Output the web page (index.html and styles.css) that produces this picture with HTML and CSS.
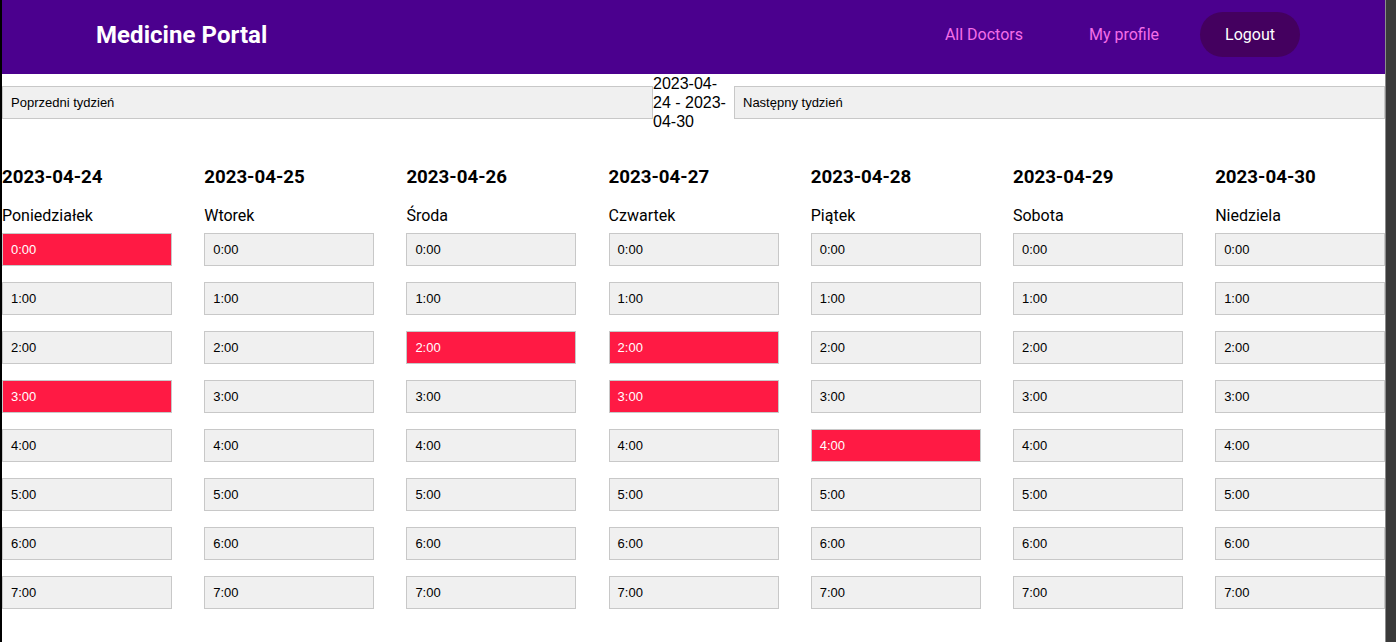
FILE: index.html
```html
<!DOCTYPE html>
<html lang="pl">
<head>
<meta charset="utf-8">
<title>Medicine Portal</title>
<link rel="stylesheet" href="styles.css">
</head>
<body>
<div class="page">
  <header class="topbar">
    <div class="brand">Medicine Portal</div>
    <nav class="nav">
      <a class="nav-link" href="#">All Doctors</a>
      <a class="nav-link" href="#">My profile</a>
      <a class="nav-link logout" href="#">Logout</a>
    </nav>
  </header>

  <div class="week-bar">
    <button class="btn week-btn">Poprzedni tydzień</button>
    <span class="week-range">2023-04-24 - 2023-04-30</span>
    <button class="btn week-btn">Następny tydzień</button>
  </div>

  <div class="days">
    <div class="day">
      <h3 class="day-date">2023-04-24</h3>
      <p class="day-name">Poniedziałek</p>
      <div class="slots">
        <button class="btn slot busy">0:00</button>
        <button class="btn slot">1:00</button>
        <button class="btn slot">2:00</button>
        <button class="btn slot busy">3:00</button>
        <button class="btn slot">4:00</button>
        <button class="btn slot">5:00</button>
        <button class="btn slot">6:00</button>
        <button class="btn slot">7:00</button>
      </div>
    </div>
    <div class="day">
      <h3 class="day-date">2023-04-25</h3>
      <p class="day-name">Wtorek</p>
      <div class="slots">
        <button class="btn slot">0:00</button>
        <button class="btn slot">1:00</button>
        <button class="btn slot">2:00</button>
        <button class="btn slot">3:00</button>
        <button class="btn slot">4:00</button>
        <button class="btn slot">5:00</button>
        <button class="btn slot">6:00</button>
        <button class="btn slot">7:00</button>
      </div>
    </div>
    <div class="day">
      <h3 class="day-date">2023-04-26</h3>
      <p class="day-name">Środa</p>
      <div class="slots">
        <button class="btn slot">0:00</button>
        <button class="btn slot">1:00</button>
        <button class="btn slot busy">2:00</button>
        <button class="btn slot">3:00</button>
        <button class="btn slot">4:00</button>
        <button class="btn slot">5:00</button>
        <button class="btn slot">6:00</button>
        <button class="btn slot">7:00</button>
      </div>
    </div>
    <div class="day">
      <h3 class="day-date">2023-04-27</h3>
      <p class="day-name">Czwartek</p>
      <div class="slots">
        <button class="btn slot">0:00</button>
        <button class="btn slot">1:00</button>
        <button class="btn slot busy">2:00</button>
        <button class="btn slot busy">3:00</button>
        <button class="btn slot">4:00</button>
        <button class="btn slot">5:00</button>
        <button class="btn slot">6:00</button>
        <button class="btn slot">7:00</button>
      </div>
    </div>
    <div class="day">
      <h3 class="day-date">2023-04-28</h3>
      <p class="day-name">Piątek</p>
      <div class="slots">
        <button class="btn slot">0:00</button>
        <button class="btn slot">1:00</button>
        <button class="btn slot">2:00</button>
        <button class="btn slot">3:00</button>
        <button class="btn slot busy">4:00</button>
        <button class="btn slot">5:00</button>
        <button class="btn slot">6:00</button>
        <button class="btn slot">7:00</button>
      </div>
    </div>
    <div class="day">
      <h3 class="day-date">2023-04-29</h3>
      <p class="day-name">Sobota</p>
      <div class="slots">
        <button class="btn slot">0:00</button>
        <button class="btn slot">1:00</button>
        <button class="btn slot">2:00</button>
        <button class="btn slot">3:00</button>
        <button class="btn slot">4:00</button>
        <button class="btn slot">5:00</button>
        <button class="btn slot">6:00</button>
        <button class="btn slot">7:00</button>
      </div>
    </div>
    <div class="day">
      <h3 class="day-date">2023-04-30</h3>
      <p class="day-name">Niedziela</p>
      <div class="slots">
        <button class="btn slot">0:00</button>
        <button class="btn slot">1:00</button>
        <button class="btn slot">2:00</button>
        <button class="btn slot">3:00</button>
        <button class="btn slot">4:00</button>
        <button class="btn slot">5:00</button>
        <button class="btn slot">6:00</button>
        <button class="btn slot">7:00</button>
      </div>
    </div>
  </div>
</div>
<div class="scroll-strip"></div>
</body>
</html>
```

FILE: styles.css
```css
html, body {
  margin: 0;
  padding: 0;
  height: 100%;
}

body {
  display: flex;
  background: #ffffff;
  border-left: 2px solid #000000;
  overflow: hidden;
  font-family: Roboto, "Liberation Sans", Arial, sans-serif;
  color: #000000;
}

.page {
  flex: 1;
  min-width: 0;
  border-right: 1px solid #8c8c8c;
}

.scroll-strip {
  flex: 0 0 10px;
  background: #3a3a3a;
}

.topbar {
  height: 74px;
  background: #4b008e;
  display: flex;
  align-items: center;
  justify-content: space-between;
  padding: 0 85px 0 94px;
  box-sizing: border-box;
}

.brand {
  color: #ffffff;
  font-weight: 700;
  font-size: 24px;
  letter-spacing: 0.05px;
  margin-top: -5px;
}

.nav {
  display: flex;
  align-items: center;
  gap: 16px;
  margin-top: -5px;
}

.nav-link {
  display: block;
  padding: 12px 25px;
  border-radius: 24px;
  color: #f46ee8;
  font-size: 16px;
  line-height: 21px;
  text-decoration: none;
}

.nav-link.logout {
  background: #44005f;
  color: #ffffff;
}

.btn {
  font-family: "Liberation Sans", Arial, sans-serif;
  font-size: 13px;
  line-height: 15px;
  text-align: left;
  padding: 8px;
  background: #f0f0f0;
  border: 1px solid #c8c8c8;
  color: #000000;
  margin: 0;
  border-radius: 0;
  box-sizing: border-box;
  height: 33px;
}

.week-bar {
  display: flex;
  align-items: center;
}

.week-btn {
  flex: 1;
}

.week-range {
  flex: 0 0 81px;
  font-family: "Liberation Sans", Arial, sans-serif;
  font-size: 16px;
  line-height: 19px;
}

.days {
  display: grid;
  grid-template-columns: repeat(7, 170px);
  column-gap: 32.2px;
}

.day-date {
  font-size: 18.72px;
  font-weight: 700;
  margin: 35px 0 18px;
  line-height: 22px;
}

.day-name {
  font-size: 16px;
  margin: 0 0 8px;
  line-height: 19px;
}

.slots {
  display: flex;
  flex-direction: column;
  gap: 16px;
}

.slot {
  width: 170px;
}

.slot.busy {
  background: #ff1a44;
  color: #ffffff;
}
```
